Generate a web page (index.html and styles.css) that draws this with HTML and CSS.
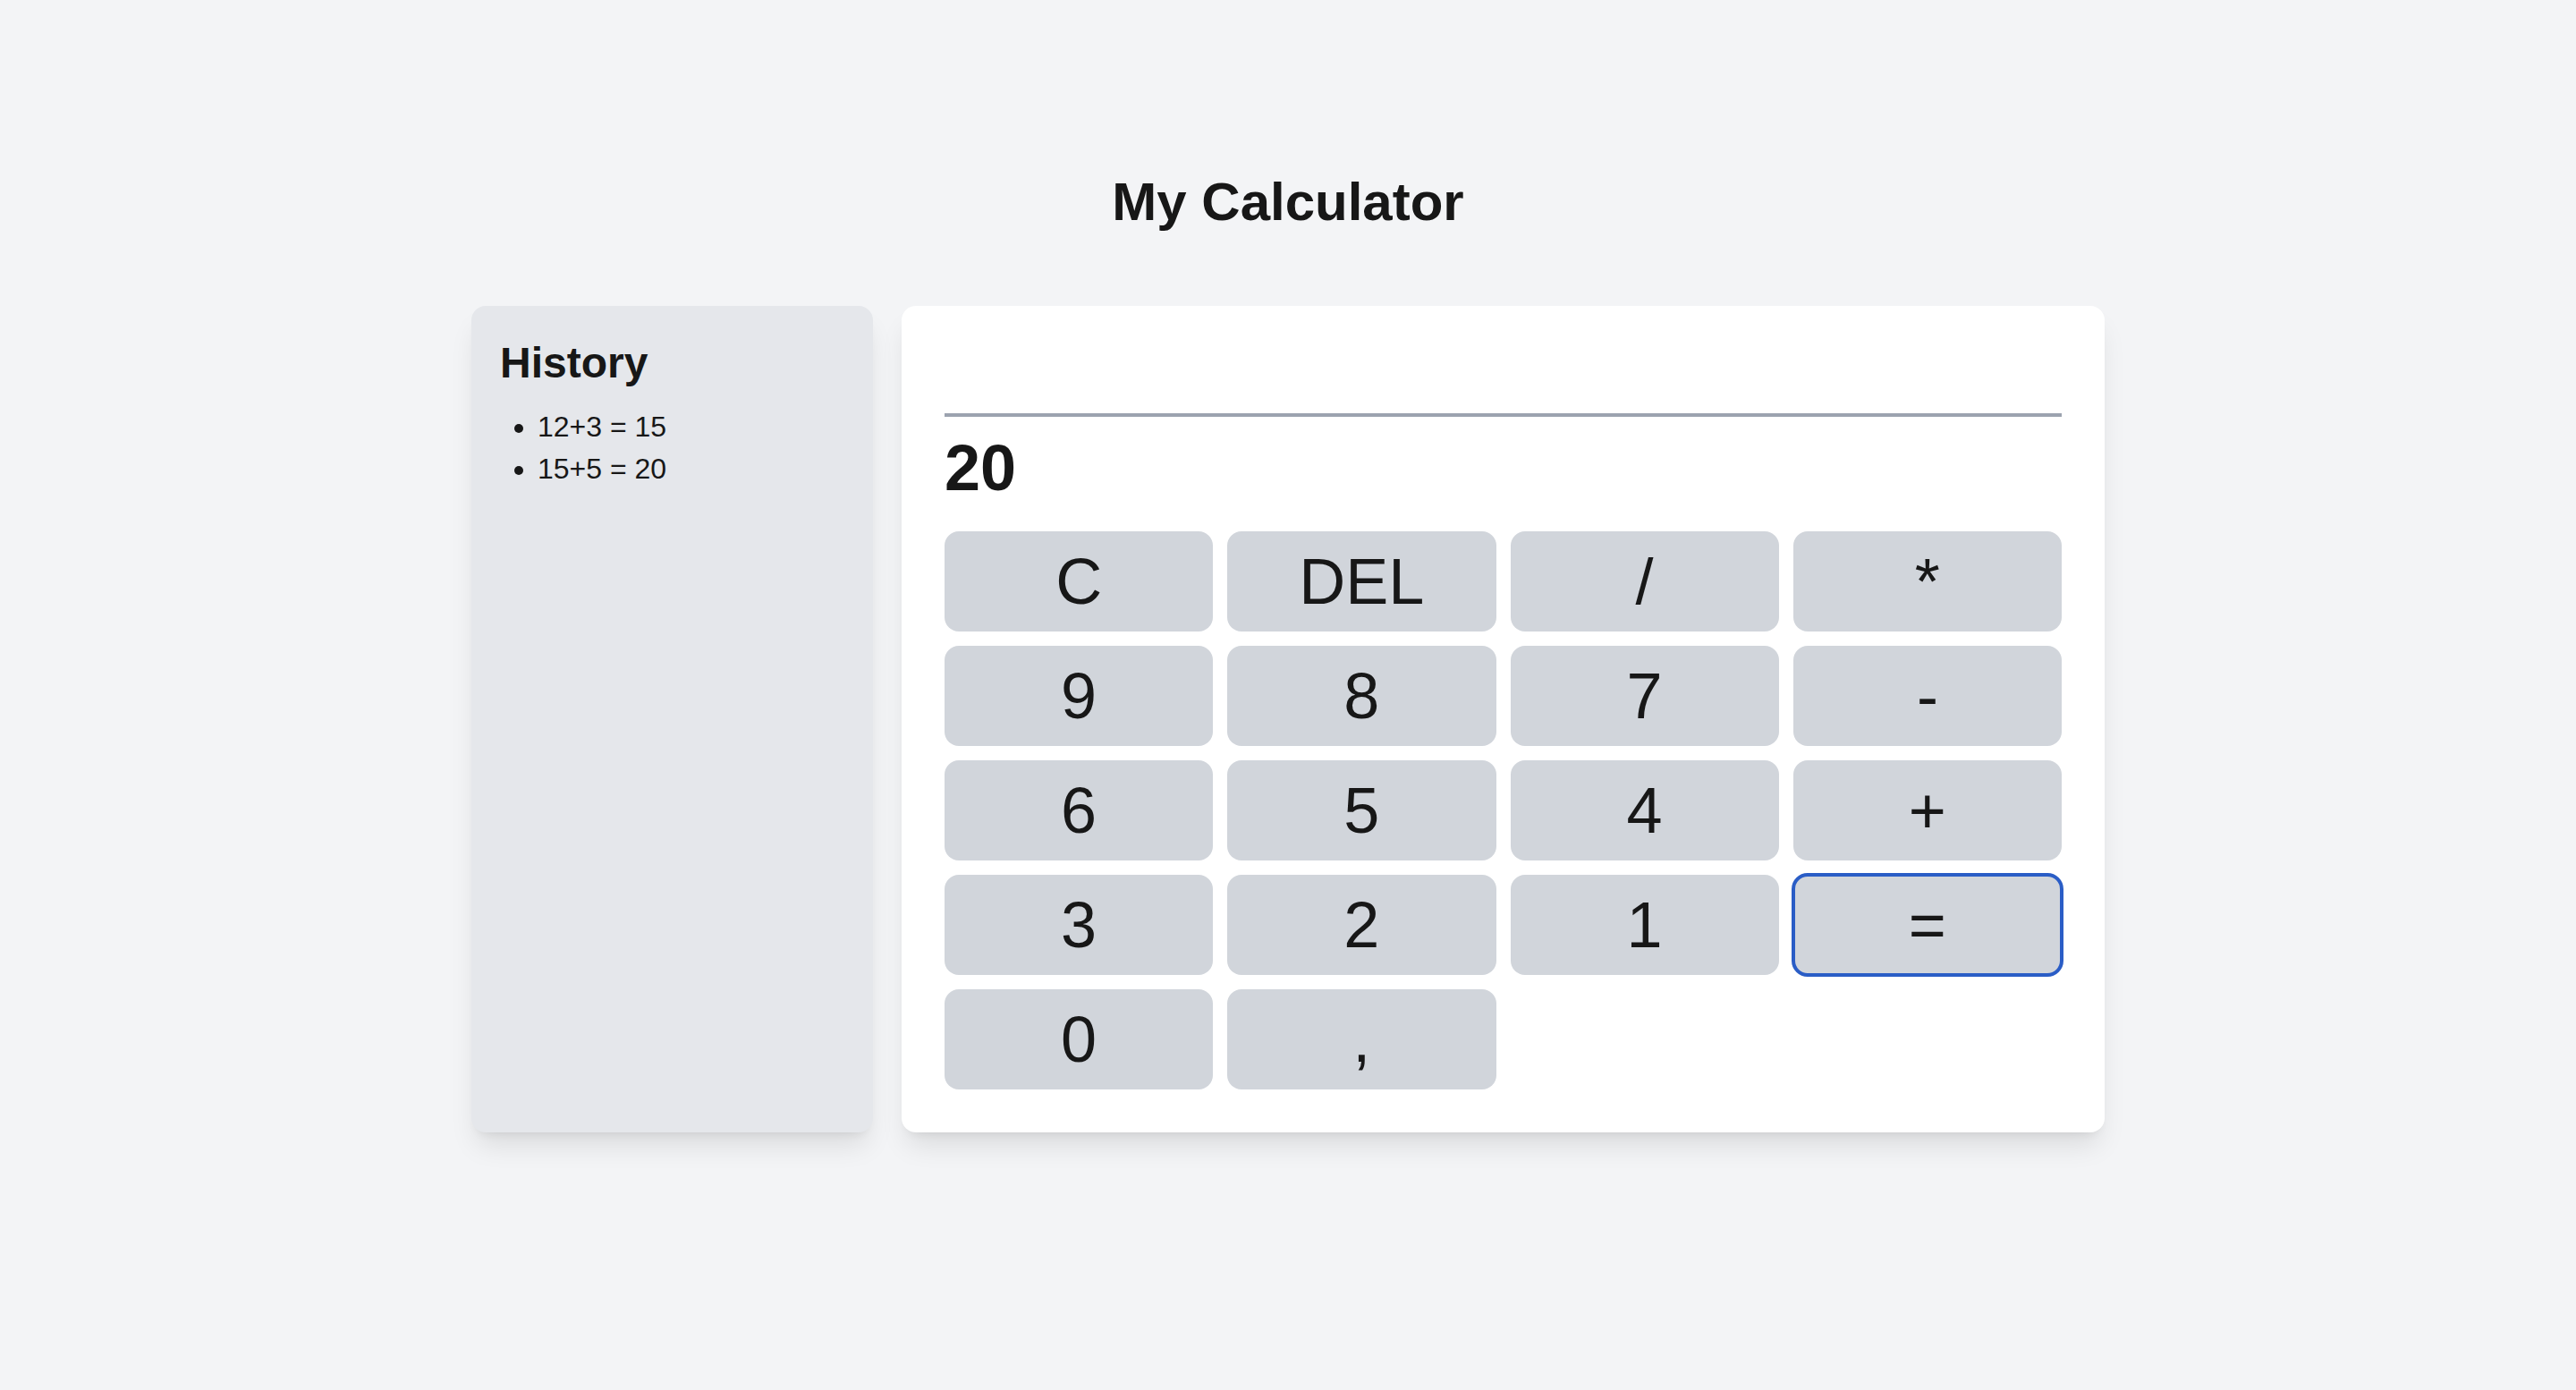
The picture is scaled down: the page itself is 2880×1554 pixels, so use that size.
FILE: index.html
```html
<!DOCTYPE html>
<html lang="en">
<head>
<meta charset="utf-8">
<title>My Calculator</title>
<link rel="stylesheet" href="styles.css">
</head>
<body>
<main class="page">
  <h1 class="title">My Calculator</h1>
  <div class="layout">
    <aside class="history">
      <h2 class="history-title">History</h2>
      <ul class="history-list">
        <li>12+3 = 15</li>
        <li>15+5 = 20</li>
      </ul>
    </aside>
    <section class="calc">
      <div class="expr"></div>
      <div class="result">20</div>
      <div class="keys">
        <button class="key">C</button>
        <button class="key">DEL</button>
        <button class="key">/</button>
        <button class="key">*</button>
        <button class="key">9</button>
        <button class="key">8</button>
        <button class="key">7</button>
        <button class="key">-</button>
        <button class="key">6</button>
        <button class="key">5</button>
        <button class="key">4</button>
        <button class="key">+</button>
        <button class="key">3</button>
        <button class="key">2</button>
        <button class="key">1</button>
        <button class="key key-focus">=</button>
        <button class="key">0</button>
        <button class="key">,</button>
      </div>
    </section>
  </div>
</main>
</body>
</html>
```
FILE: styles.css
```css
* { box-sizing: border-box; }
html, body {
  margin: 0;
  padding: 0;
  background: #f3f4f6;
  color: #171717;
  font-family: "Liberation Sans", Arial, Helvetica, sans-serif;
}
.page {
  padding-top: 190px;
  min-height: 1554px;
}
.title {
  margin: 0 0 80px;
  text-align: center;
  font-size: 60px;
  line-height: 72px;
  font-weight: 700;
}
.layout {
  display: flex;
  gap: 32px;
  width: 1826px;
  margin: 0 auto;
  align-items: stretch;
}
.history {
  flex: 0 0 449px;
  background: #e5e7eb;
  border-radius: 16px;
  padding: 32px;
  box-shadow: 0 20px 30px -6px rgba(0,0,0,0.1), 0 8px 12px -8px rgba(0,0,0,0.1);
}
.history-title {
  margin: 0 0 16px;
  font-size: 48px;
  line-height: 64px;
  font-weight: 700;
}
.history-list {
  margin: 0;
  padding-left: 42px;
  font-size: 32px;
  line-height: 47px;
}
.calc {
  flex: 1 1 auto;
  min-width: 0;
  background: #ffffff;
  border-radius: 16px;
  padding: 48px;
  box-shadow: 0 20px 30px -6px rgba(0,0,0,0.1), 0 8px 12px -8px rgba(0,0,0,0.1);
}
.expr {
  height: 76px;
  border-bottom: 4px solid #9ca3af;
}
.result {
  margin: 17px 0 31px;
  font-size: 72px;
  line-height: 80px;
  font-weight: 700;
}
.keys {
  display: grid;
  grid-template-columns: repeat(4, minmax(0, 1fr));
  gap: 16px;
}
.key {
  height: 112px;
  border: 0;
  border-radius: 16px;
  background: #d1d5db;
  color: #171717;
  font-family: "Liberation Sans", Arial, Helvetica, sans-serif;
  font-size: 72px;
  line-height: 80px;
  padding: 16px 0;
  margin: 0;
}
.key-focus {
  outline: 4px solid #2a5dc6;
  outline-offset: -2px;
}
```
